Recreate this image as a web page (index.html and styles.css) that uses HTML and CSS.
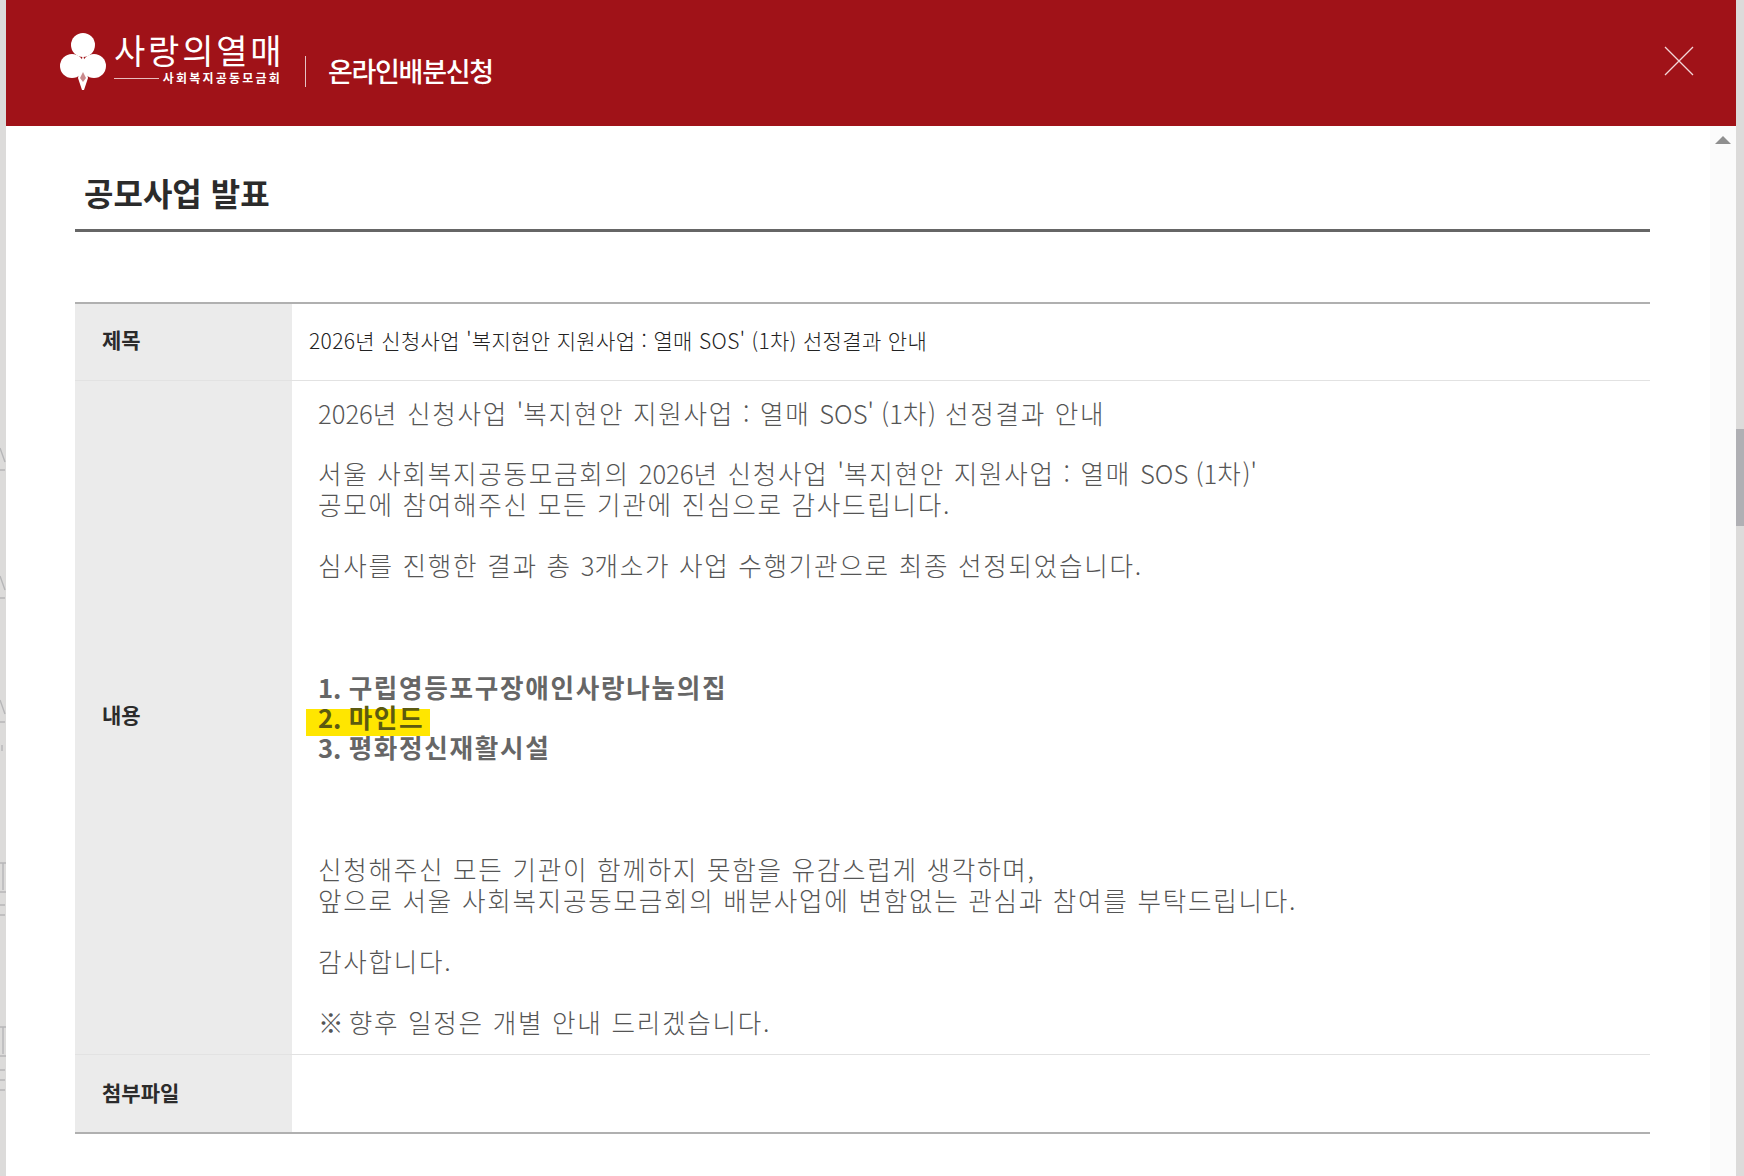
FILE: index.html
```html
<!DOCTYPE html>
<html lang="ko">
<head>
<meta charset="utf-8">
<title>공모사업 발표</title>
<link rel="stylesheet" href="styles.css">
</head>
<body>
<svg class="backdrop" width="6" height="1176" viewBox="0 0 6 1176" aria-hidden="true">
  <path d="M0 448 L5 462 M0 470 H5 M0 576 L5 590 M0 598 H5 M0 700 L5 714 M0 722 H5 M2 745 V751 M0 863 H6 M3 863 V890 M0 892 H6 M0 905 H5 M0 915 H5 M0 1027 H6 M3 1027 V1054 M0 1056 H6 M0 1070 H5 M0 1080 H5 M0 1090 H5"
        stroke="#b6b6b8" stroke-width="1.4" fill="none"/>
</svg>
<div class="modal">
  <header class="modal-head">
    <div class="logo">
      <svg class="logo-mark" width="48" height="60" viewBox="0 0 48 60" aria-hidden="true">
        <circle cx="24" cy="13" r="12" fill="#fff"/>
        <circle cx="13" cy="34" r="12" fill="#fff"/>
        <circle cx="35" cy="34" r="12" fill="#fff"/>
        <path d="M24 22 L29 46 L25 58 L23 58 L19 46 Z" fill="#fff"/>
        <path d="M24 40 L21 46 L24 50 L27 46 Z" fill="#c98a8d"/>
      </svg>
      <div class="logo-text">
        <div class="logo-name">사랑의열매</div>
        <div class="logo-sub"><span class="logo-rule"></span><span>사회복지공동모금회</span></div>
      </div>
    </div>
    <span class="head-divider"></span>
    <div class="head-title">온라인배분신청</div>
    <svg class="close" width="30" height="30" viewBox="0 0 30 30" aria-hidden="true">
      <path d="M1 1 L29 29 M29 1 L1 29" stroke="#f3d6d8" stroke-width="1.3" fill="none"/>
    </svg>
  </header>
  <div class="modal-scroll">
    <main class="content">
      <h1 class="page-title">공모사업 발표</h1>
      <table class="info">
        <tr>
          <th>제목</th>
          <td class="subject">2026년 신청사업 '복지현안 지원사업 : 열매 SOS' (1차) 선정결과 안내</td>
        </tr>
        <tr>
          <th>내용</th>
          <td class="body-cell">
            <p class="line"><span class="lat">2026</span>년 신청사업 <span class="lat">'</span>복지현안 지원사업 : 열매 <span class="lat">SOS' (1</span>차<span class="lat">)</span> 선정결과 안내</p>
            <p class="line">&nbsp;</p>
            <p class="line">서울 사회복지공동모금회의 <span class="lat">2026</span>년 신청사업 <span class="lat">'</span>복지현안 지원사업 : 열매 <span class="lat">SOS (1</span>차<span class="lat">)'</span></p>
            <p class="line">공모에 참여해주신 모든 기관에 진심으로 감사드립니다.</p>
            <p class="line">&nbsp;</p>
            <p class="line">심사를 진행한 결과 총 <span class="lat">3</span>개소가 사업 수행기관으로 최종 선정되었습니다.</p>
            <p class="line">&nbsp;</p>
            <p class="line">&nbsp;</p>
            <p class="line">&nbsp;</p>
            <p class="line strong"><span class="lat">1. </span>구립영등포구장애인사랑나눔의집</p>
            <p class="line strong"><span class="mark"><span class="lat">2. </span>마인드</span></p>
            <p class="line strong"><span class="lat">3. </span>평화정신재활시설</p>
            <p class="line">&nbsp;</p>
            <p class="line">&nbsp;</p>
            <p class="line">&nbsp;</p>
            <p class="line">신청해주신 모든 기관이 함께하지 못함을 유감스럽게 생각하며,</p>
            <p class="line">앞으로 서울 사회복지공동모금회의 배분사업에 변함없는 관심과 참여를 부탁드립니다.</p>
            <p class="line">&nbsp;</p>
            <p class="line">감사합니다.</p>
            <p class="line">&nbsp;</p>
            <p class="line"><span class="sym">※ </span>향후 일정은 개별 안내 드리겠습니다.</p>
          </td>
        </tr>
        <tr>
          <th>첨부파일</th>
          <td></td>
        </tr>
      </table>
    </main>
    <div class="gutter"><span class="arrow-up"></span></div>
  </div>
</div>
<div class="page-thumb"></div>
</body>
</html>
```
FILE: styles.css
```css
* { box-sizing: border-box; }
html, body { margin: 0; height: 100%; }
body {
  height: 1176px;
  overflow: hidden;
  background: #dcdbda;
  font-family: "Noto Sans CJK KR", "Noto Sans", sans-serif;
  position: relative;
}
.backdrop { position: absolute; top: 0; left: 0; }
.modal {
  position: relative;
  margin: 0 8px 0 6px;
  height: 1176px;
  display: flex;
  flex-direction: column;
  background: #fff;
}
.modal-head {
  flex: none;
  height: 126px;
  background: #a01218;
  display: flex;
  align-items: center;
  padding-left: 53px;
  color: #fff;
}
.logo { display: flex; align-items: flex-start; margin-top: 0; }
.logo-mark { flex: none; margin-top: -2px; }
.logo-text { margin-left: 7px; width: 168px; }
.logo-name {
  font-size: 34px;
  font-weight: 400;
  line-height: 36px;
  letter-spacing: 2.8px;
  margin-top: -2px;
  white-space: nowrap;
}
.logo-sub {
  display: flex;
  align-items: center;
  font-size: 12px;
  font-weight: 700;
  line-height: 14px;
  letter-spacing: 2.2px;
  white-space: nowrap;
  margin-top: 3px;
}
.logo-rule { width: 45px; height: 1px; background: #e8bcbe; margin-right: 4px; }
.head-divider { width: 1px; height: 31px; background: #e5c2c4; margin: 17px 22px 0 23px; }
.head-title {
  font-size: 27px;
  font-weight: 500;
  line-height: 34px;
  letter-spacing: -1.3px;
  margin-top: 16px;
  white-space: nowrap;
}
.close { margin-left: auto; margin-right: 42px; margin-top: -4px; }
.modal-scroll { flex: 1; display: flex; min-height: 0; }
.content { flex: 1; padding: 0 60px 0 69px; }
.gutter { flex: none; width: 26px; background: #fbfbfb; padding: 10px 0 0 5px; }
.arrow-up {
  display: block;
  width: 0;
  height: 0;
  border-left: 8px solid transparent;
  border-right: 8px solid transparent;
  border-bottom: 8px solid #8f8f8f;
}
.page-title {
  margin: 0 0 70px;
  height: 106px;
  padding: 46px 0 0 9px;
  font-size: 32px;
  font-weight: 700;
  line-height: 40px;
  color: #2b2b2b;
  border-bottom: 3px solid #666;
}
.info {
  width: 1575px;
  border-collapse: collapse;
  border-top: 2px solid #b0b0b0;
  border-bottom: 2px solid #b0b0b0;
  table-layout: fixed;
}
.info tr + tr { border-top: 1px solid #e2e2e2; }
.info th {
  width: 217px;
  background: #ebebeb;
  text-align: left;
  padding: 0 0 6px 27px;
  font-size: 21px;
  font-weight: 700;
  color: #2b2b2b;
}
.info tr:first-child th, .info tr:first-child td { height: 77px; }
.info tr:last-child th, .info tr:last-child td { height: 78px; }
.info tr:last-child th { padding-bottom: 3px; }
.subject { padding: 0 0 3px 17px; font-size: 21px; font-weight: 300; color: #222; white-space: nowrap; letter-spacing: 0.35px; }
.body-cell { padding: 17px 0 17px 26px; color: #555; font-size: 25.6px; font-weight: 300; }
.line { margin: 0; line-height: 30.45px; white-space: nowrap; letter-spacing: 1.7px; }
.line.strong { font-weight: 700; color: #666; }
.lat { letter-spacing: 0; }
.sym { letter-spacing: -1px; }
.mark {
  position: relative;
  z-index: 0;
  color: #5c5a10;
}
.mark::before {
  content: "";
  position: absolute;
  z-index: -1;
  left: -12px;
  right: -6px;
  top: 11px;
  height: 27px;
  background: #ffe600;
}
.page-thumb {
  position: absolute;
  top: 429px;
  right: 0;
  width: 8px;
  height: 97px;
  background: #b0b0b4;
}
```
